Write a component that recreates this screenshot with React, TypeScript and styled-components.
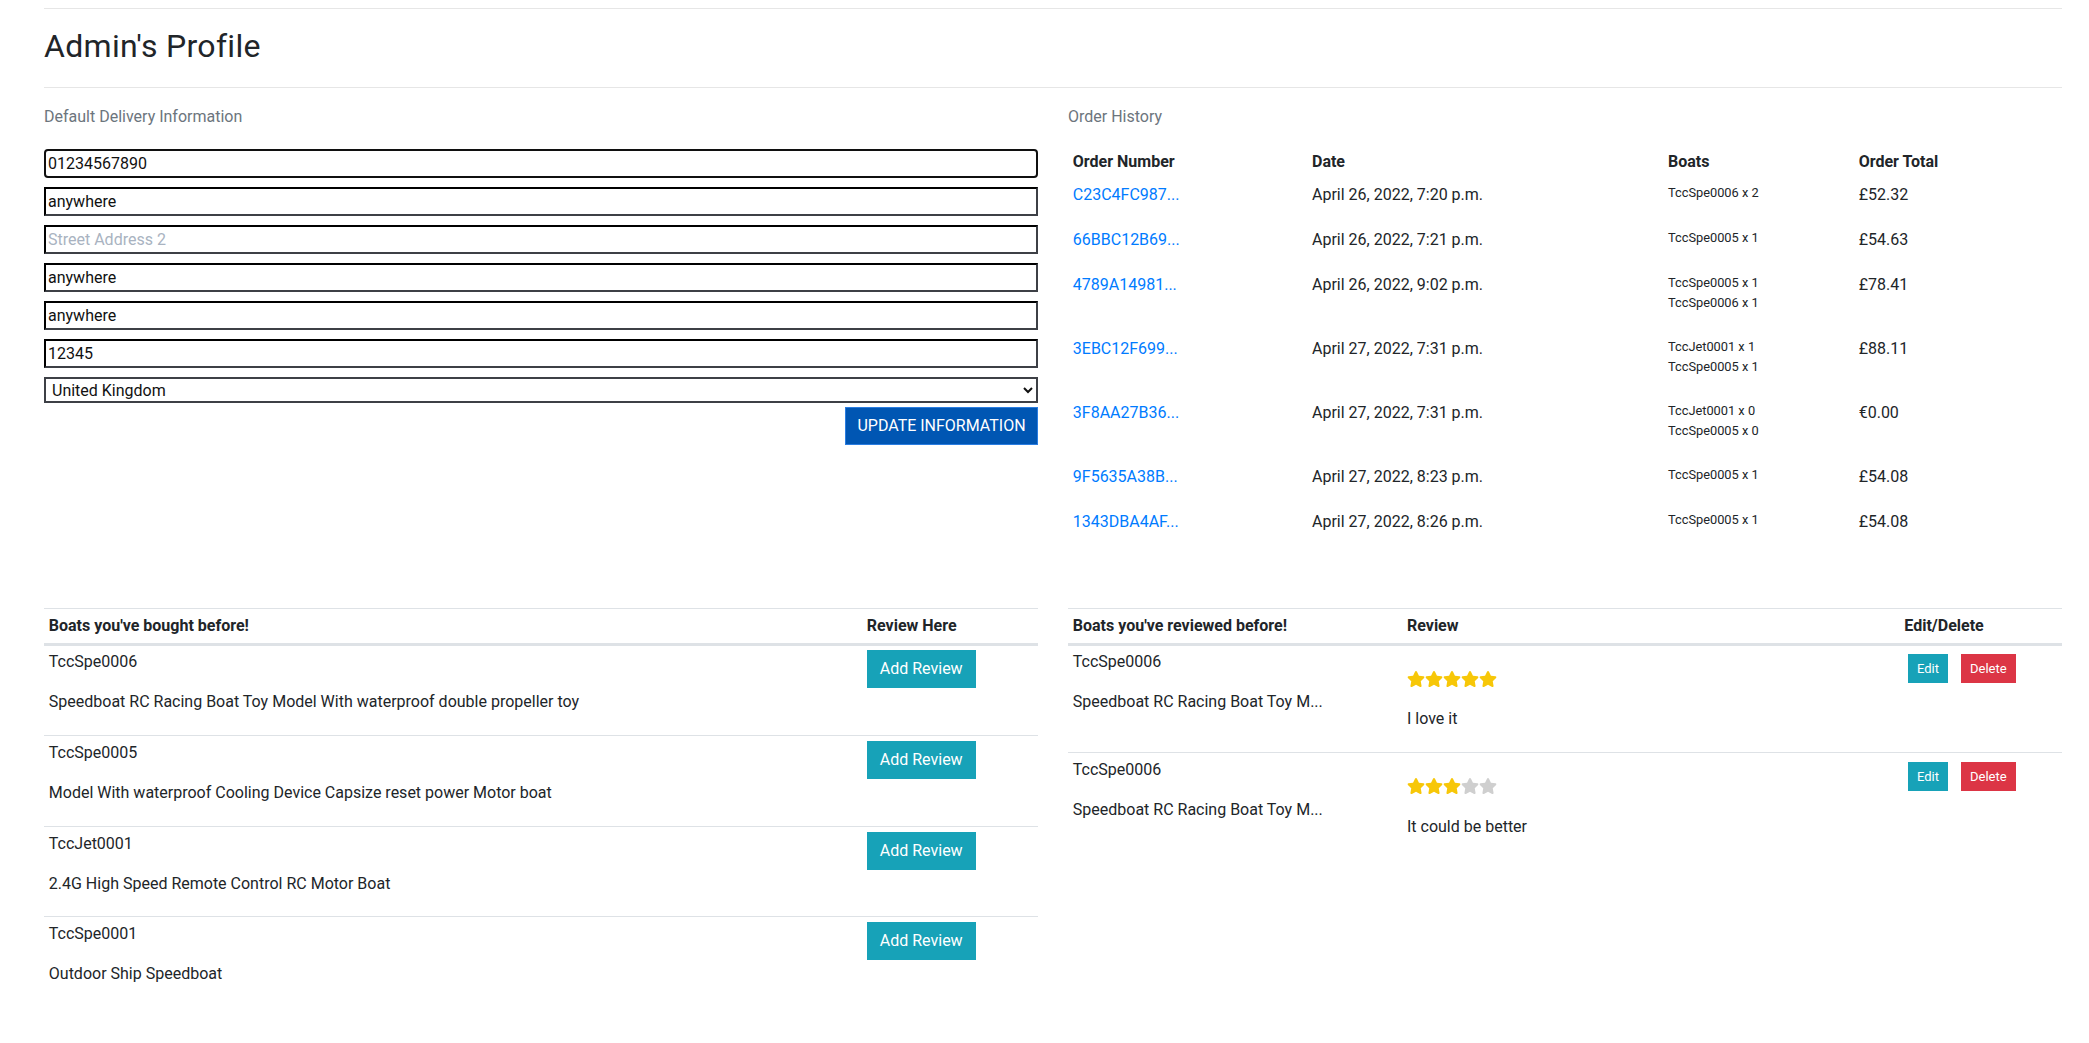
import React from "react";
import styled, { createGlobalStyle, css } from "styled-components";

const GlobalStyle = createGlobalStyle`
  html, body { margin: 0; padding: 0; background: #ffffff; }
  body {
    font-family: Roboto, "Liberation Sans", Arial, sans-serif;
    font-size: 16px;
    line-height: 1.5;
    color: #212529;
  }
  *, *::before, *::after { box-sizing: border-box; }
`;

const Page = styled.main`
  width: 2018px;
  margin-left: 44px;
  padding-top: 8px;
  padding-bottom: 30px;
`;

const Rule = styled.hr`
  margin: 0;
  border: 0;
  height: 1px;
  background: #e6e6e6;
`;

const Title = styled.h2`
  margin: 18px 0 21.6px;
  font-size: 32px;
  line-height: 38.4px;
  font-weight: 400;
  letter-spacing: 0.3px;
  color: #212529;
`;

const TwoColumns = styled.div<{ $top: number }>`
  display: grid;
  grid-template-columns: 1fr 1fr;
  column-gap: 30px;
  align-items: start;
  margin-top: ${(p) => p.$top}px;
`;

const Column = styled.section`
  min-width: 0;
`;

const SectionLabel = styled.p`
  margin: 0 0 16px;
  color: #6c757d;
  font-size: 16px;
  line-height: 24px;
`;

const Form = styled.form`
  display: flex;
  flex-direction: column;
  padding-top: 4px;
`;

const TextInput = styled.input<{ $focused?: boolean }>`
  height: 29px;
  margin: 0 0 9px;
  padding: 1px 2px;
  font-family: inherit;
  font-size: 16px;
  line-height: normal;
  color: #111;
  background: #fff;
  border-width: 2px;
  border-style: solid;
  border-color: #000 #3d4046 #3d4046 #000;
  border-radius: 0;
  outline: none;
  ${(p) =>
    p.$focused &&
    css`
      border-color: #101010;
      border-radius: 4px;
    `}
  &::placeholder {
    color: #a9b3c1;
  }
`;

const CountrySelect = styled.select`
  height: 26px;
  padding: 0 2px;
  font-family: inherit;
  font-size: 16px;
  color: #111;
  background: #fff;
  border: 2px solid #3d4046;
  border-radius: 0;
`;

const ButtonRow = styled.div`
  display: flex;
  justify-content: flex-end;
  margin-top: 4px;
`;

const PrimaryButton = styled.button`
  width: 193px;
  height: 38px;
  padding: 0;
  background: #0056b3;
  border: 1px solid #2a7de1;
  color: #ffffff;
  font-family: inherit;
  font-size: 16px;
  line-height: 24px;
  text-transform: uppercase;
  border-radius: 0;
`;

const Table = styled.table`
  width: 100%;
  border-collapse: separate;
  border-spacing: 0;
  table-layout: fixed;
`;

const OrderHead = styled.th`
  padding: 4.8px;
  text-align: left;
  font-weight: 700;
  line-height: 24px;
  vertical-align: bottom;
`;

const OrderCell = styled.td`
  padding: 4.8px 4.8px 0;
  vertical-align: top;
  line-height: 24px;
`;

const OrderLink = styled.a`
  display: block;
  margin-bottom: 16px;
  color: #007bff;
  text-decoration: none;
`;

const CellText = styled.p`
  margin: 0 0 16px;
  line-height: 24px;
`;

const BoatList = styled.div`
  margin-bottom: 19.2px;
`;

const BoatLine = styled.small`
  display: block;
  font-size: 12.8px;
  line-height: 20px;
`;

const GridHead = styled.th`
  padding: 4.8px;
  text-align: left;
  font-weight: 700;
  line-height: 24px;
  border-top: 1px solid #dee2e6;
  border-bottom: 2px solid #dee2e6;
  vertical-align: bottom;
`;

const GridRow = styled.tr``;

const GridCell = styled.td`
  padding: 4.8px;
  vertical-align: top;
  line-height: 24px;
  border-top: 1px solid #dee2e6;
`;

const SolidButton = styled.button<{ $tone: "info" | "danger"; $size?: "sm" }>`
  display: inline-block;
  padding: 6px 12px;
  font-family: inherit;
  font-size: 16px;
  line-height: 24px;
  color: #ffffff;
  border-radius: 0;
  border: 1px solid ${(p) => (p.$tone === "info" ? "#17a2b8" : "#dc3545")};
  background: ${(p) => (p.$tone === "info" ? "#17a2b8" : "#dc3545")};
  ${(p) =>
    p.$size === "sm" &&
    css`
      padding: 4px 8px;
      font-size: 13px;
      line-height: 19.2px;
    `}
`;

const ActionGroup = styled.div`
  display: flex;
  gap: 13px;
  padding: 3.6px 0 0 3.7px;
`;

const StarRow = styled.div`
  display: flex;
  align-items: center;
  height: 57px;
`;

const StarIcon = styled.svg<{ $on: boolean }>`
  width: 18px;
  height: 16px;
  fill: ${(p) => (p.$on ? "#f7c708" : "#cfcfcf")};
`;

const STAR_PATH =
  "M259.3 17.8L194 150.2 47.9 171.5c-26.2 3.8-36.7 36.1-17.7 54.6l105.7 103-25 145.5c-4.5 26.3 23.2 46 46.4 33.7L288 439.6l130.7 68.7c23.2 12.2 50.9-7.4 46.4-33.7l-25-145.5 105.7-103c19-18.5 8.5-50.8-17.7-54.6L382 150.2 316.7 17.8c-11.7-23.6-45.6-23.9-57.4 0z";

const Stars = ({ value }: { value: number }) => (
  <StarRow>
    {[1, 2, 3, 4, 5].map((i) => (
      <StarIcon key={i} $on={i <= value} viewBox="0 0 576 512">
        <path d={STAR_PATH} />
      </StarIcon>
    ))}
  </StarRow>
);

const orders = [
  { id: "C23C4FC987...", date: "April 26, 2022, 7:20 p.m.", boats: ["TccSpe0006 x 2"], total: "£52.32" },
  { id: "66BBC12B69...", date: "April 26, 2022, 7:21 p.m.", boats: ["TccSpe0005 x 1"], total: "£54.63" },
  { id: "4789A14981...", date: "April 26, 2022, 9:02 p.m.", boats: ["TccSpe0005 x 1", "TccSpe0006 x 1"], total: "£78.41" },
  { id: "3EBC12F699...", date: "April 27, 2022, 7:31 p.m.", boats: ["TccJet0001 x 1", "TccSpe0005 x 1"], total: "£88.11" },
  { id: "3F8AA27B36...", date: "April 27, 2022, 7:31 p.m.", boats: ["TccJet0001 x 0", "TccSpe0005 x 0"], total: "€0.00" },
  { id: "9F5635A38B...", date: "April 27, 2022, 8:23 p.m.", boats: ["TccSpe0005 x 1"], total: "£54.08" },
  { id: "1343DBA4AF...", date: "April 27, 2022, 8:26 p.m.", boats: ["TccSpe0005 x 1"], total: "£54.08" },
];

const bought = [
  { sku: "TccSpe0006", name: "Speedboat RC Racing Boat Toy Model With waterproof double propeller toy" },
  { sku: "TccSpe0005", name: "Model With waterproof Cooling Device Capsize reset power Motor boat" },
  { sku: "TccJet0001", name: "2.4G High Speed Remote Control RC Motor Boat" },
  { sku: "TccSpe0001", name: "Outdoor Ship Speedboat" },
];

const reviews = [
  { sku: "TccSpe0006", name: "Speedboat RC Racing Boat Toy M...", rating: 5, text: "I love it" },
  { sku: "TccSpe0006", name: "Speedboat RC Racing Boat Toy M...", rating: 3, text: "It could be better" },
];

export default function App() {
  return (
    <>
      <GlobalStyle />
      <Page>
        <Rule />
        <Title>Admin's Profile</Title>
        <Rule />

        <TwoColumns $top={17}>
          <Column>
            <SectionLabel>Default Delivery Information</SectionLabel>
            <Form onSubmit={(e) => e.preventDefault()}>
              <TextInput $focused defaultValue="01234567890" />
              <TextInput defaultValue="anywhere" />
              <TextInput placeholder="Street Address 2" />
              <TextInput defaultValue="anywhere" />
              <TextInput defaultValue="anywhere" />
              <TextInput defaultValue="12345" />
              <CountrySelect defaultValue="GB">
                <option value="GB">United Kingdom</option>
                <option value="IE">Ireland</option>
              </CountrySelect>
              <ButtonRow>
                <PrimaryButton type="submit">Update Information</PrimaryButton>
              </ButtonRow>
            </Form>
          </Column>

          <Column>
            <SectionLabel>Order History</SectionLabel>
            <Table>
              <colgroup>
                <col style={{ width: "239.2px" }} />
                <col style={{ width: "356px" }} />
                <col style={{ width: "190.7px" }} />
                <col />
              </colgroup>
              <thead>
                <tr>
                  <OrderHead>Order Number</OrderHead>
                  <OrderHead>Date</OrderHead>
                  <OrderHead>Boats</OrderHead>
                  <OrderHead>Order Total</OrderHead>
                </tr>
              </thead>
              <tbody>
                {orders.map((o) => (
                  <tr key={o.id}>
                    <OrderCell>
                      <OrderLink href="#">{o.id}</OrderLink>
                    </OrderCell>
                    <OrderCell>
                      <CellText>{o.date}</CellText>
                    </OrderCell>
                    <OrderCell>
                      <BoatList>
                        {o.boats.map((b) => (
                          <BoatLine key={b}>{b}</BoatLine>
                        ))}
                      </BoatList>
                    </OrderCell>
                    <OrderCell>
                      <CellText>{o.total}</CellText>
                    </OrderCell>
                  </tr>
                ))}
              </tbody>
            </Table>
          </Column>
        </TwoColumns>

        <TwoColumns $top={58.2}>
          <Column>
            <Table>
              <colgroup>
                <col style={{ width: "818px" }} />
                <col />
              </colgroup>
              <thead>
                <tr>
                  <GridHead>Boats you've bought before!</GridHead>
                  <GridHead>Review Here</GridHead>
                </tr>
              </thead>
              <tbody>
                {bought.map((b) => (
                  <GridRow key={b.sku}>
                    <GridCell>
                      <CellText>{b.sku}</CellText>
                      <CellText>{b.name}</CellText>
                    </GridCell>
                    <GridCell>
                      <SolidButton $tone="info">Add Review</SolidButton>
                    </GridCell>
                  </GridRow>
                ))}
              </tbody>
            </Table>
          </Column>

          <Column>
            <Table>
              <colgroup>
                <col style={{ width: "334.2px" }} />
                <col style={{ width: "497.3px" }} />
                <col />
              </colgroup>
              <thead>
                <tr>
                  <GridHead>Boats you've reviewed before!</GridHead>
                  <GridHead>Review</GridHead>
                  <GridHead>Edit/Delete</GridHead>
                </tr>
              </thead>
              <tbody>
                {reviews.map((r, i) => (
                  <GridRow key={i}>
                    <GridCell>
                      <CellText>{r.sku}</CellText>
                      <CellText>{r.name}</CellText>
                    </GridCell>
                    <GridCell>
                      <Stars value={r.rating} />
                      <CellText>{r.text}</CellText>
                    </GridCell>
                    <GridCell>
                      <ActionGroup>
                        <SolidButton $tone="info" $size="sm">Edit</SolidButton>
                        <SolidButton $tone="danger" $size="sm">Delete</SolidButton>
                      </ActionGroup>
                    </GridCell>
                  </GridRow>
                ))}
              </tbody>
            </Table>
          </Column>
        </TwoColumns>
      </Page>
    </>
  );
}
